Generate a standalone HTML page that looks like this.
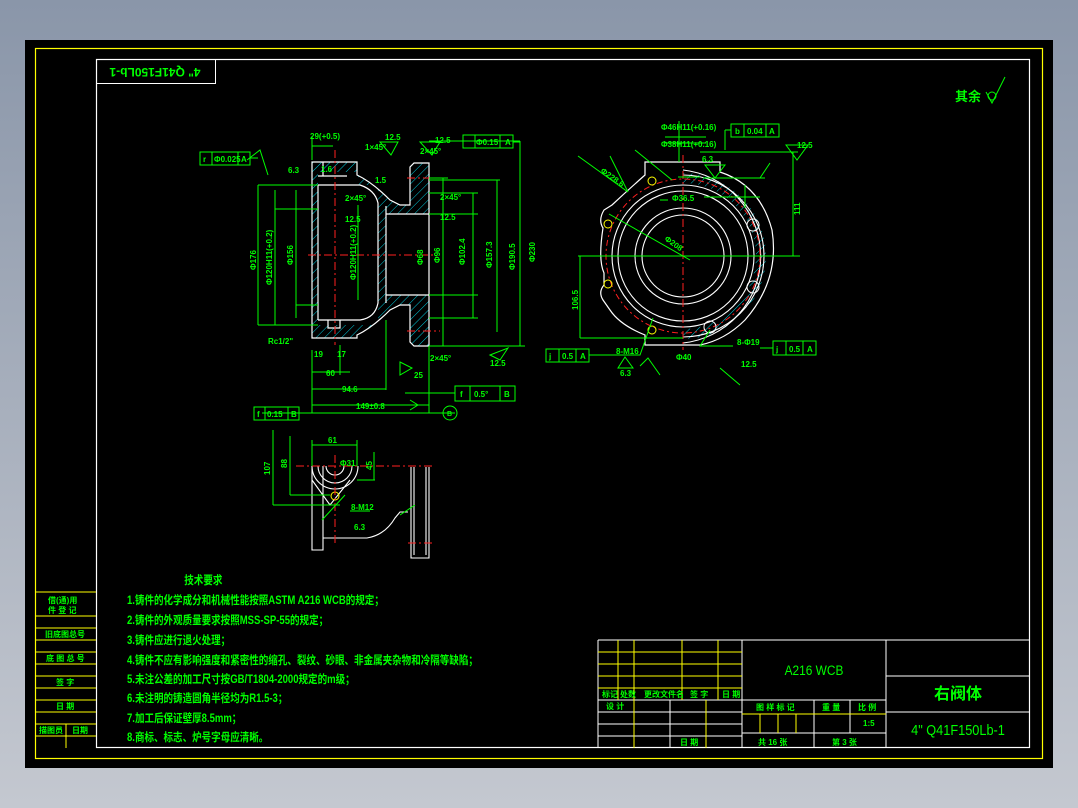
<!DOCTYPE html>
<html><head><meta charset="utf-8"><style>
html,body{margin:0;padding:0;width:1078px;height:808px;overflow:hidden;background:linear-gradient(#8a96a9,#c4c8d0);}
svg{position:absolute;left:0;top:0}
text{font-family:"Liberation Sans","Noto Sans CJK SC",sans-serif;fill:#00ff00}
</style></head><body>
<svg width="1078" height="808" viewBox="0 0 1078 808" xmlns="http://www.w3.org/2000/svg">
<defs>
<pattern id="h" width="6" height="6" patternUnits="userSpaceOnUse" patternTransform="rotate(45)">
<line x1="0" y1="0" x2="0" y2="6" stroke="#00ccdd" stroke-width="1"/></pattern>
</defs>
<rect x="25" y="40" width="1028" height="728" fill="#000"/>
<rect x="35.5" y="48.5" width="1007" height="710" fill="none" stroke="#ffff00" stroke-width="1.2"/>
<rect x="96.5" y="59.5" width="933" height="688" fill="none" stroke="#fff" stroke-width="1.2"/>
<rect x="96.5" y="59.5" width="119" height="24" fill="none" stroke="#fff"/>
<text x="155" y="71" font-size="12" text-anchor="middle" transform="rotate(180 155 71)" dominant-baseline="middle" font-weight="bold">4" Q41F150Lb-1</text>
<text x="955" y="101" font-size="13" font-weight="bold">其余</text>
<g stroke="#00ff00" fill="none"><circle cx="992" cy="96" r="4"/><path d="M986 92 L992 103 L1005 77"/></g>

<g stroke="#ffff00" fill="none">
<path d="M36 592H96M36 616H96M36 628H96M36 640H96M36 652H96M36 664H96M36 676H96M36 688H96M36 700H96M36 712H96M36 724H96M36 736H96M66 724V748"/>
</g>
<g font-size="8" font-weight="bold">
<text x="48" y="603">借(通)用</text><text x="48" y="613">件 登 记</text>
<text x="45" y="637">旧底图总号</text><text x="46" y="661">底 图 总 号</text>
<text x="56" y="685">签 字</text><text x="56" y="709">日 期</text>
<text x="39" y="733">描图员</text><text x="72" y="733">日期</text>
</g>

<g font-size="11.5" font-weight="bold" transform="translate(127 0) scale(0.83 1) translate(-127 0)">
<text x="196" y="584">技术要求</text>
<text x="127" y="604">1.铸件的化学成分和机械性能按照ASTM A216 WCB的规定；</text>
<text x="127" y="624">2.铸件的外观质量要求按照MSS-SP-55的规定；</text>
<text x="127" y="644">3.铸件应进行退火处理；</text>
<text x="127" y="664">4.铸件不应有影响强度和紧密性的缩孔、裂纹、砂眼、非金属夹杂物和冷隔等缺陷；</text>
<text x="127" y="683">5.未注公差的加工尺寸按GB/T1804-2000规定的m级；</text>
<text x="127" y="702">6.未注明的铸造圆角半径均为R1.5-3；</text>
<text x="127" y="722">7.加工后保证壁厚8.5mm；</text>
<text x="127" y="741">8.商标、标志、炉号字母应清晰。</text>
</g>

<g stroke="#fff" fill="none">
<path d="M598 640H1030M598 640V748M742 640V748M886 640V748M598 700H886M886 676H1030M886 712H1030M598 712H742M598 724H742M598 736H742M670 700V748M742 714H886M742 733H886M814 700V748M850 700V733"/>
</g>
<g stroke="#ffff00" fill="none">
<path d="M598 652H742M598 664H742M598 676H742M598 688H742M618 640V700M634 640V748M682 640V700M718 640V700M706 700V748M742 714H886M760 714V733M778 714V733M796 714V733"/>
</g>
<g font-size="8" font-weight="bold">
<text x="602" y="697">标记</text><text x="620" y="697">处数</text><text x="644" y="697">更改文件名</text><text x="690" y="697">签 字</text><text x="722" y="697">日 期</text>
<text x="606" y="709">设 计</text><text x="680" y="745">日 期</text>
<text x="756" y="710">图 样 标 记</text><text x="822" y="710">重 量</text><text x="858" y="710">比 例</text>
<text x="863" y="726">1:5</text>
<text x="758" y="745">共 16 张</text><text x="832" y="745">第 3 张</text>
</g>
<text x="814" y="675" font-size="14" text-anchor="middle" transform="translate(814 0) scale(0.85 1) translate(-814 0)">A216 WCB</text>
<text x="958" y="699" font-size="16" text-anchor="middle" font-weight="bold">右阀体</text>
<text x="958" y="735" font-size="15" text-anchor="middle" transform="translate(958 0) scale(0.85 1) translate(-958 0)">4" Q41F150Lb-1</text>

<path d="M312 162H357V175Q372 182 390 200L400 205H410V167L414 163H429V346H414L410 342V305H400L390 310Q372 328 357 335V338H312Z" fill="url(#h)"/>
<path d="M318 185H378V325H318Z M386 214H429V295H386Z" fill="#000"/>
<rect x="318" y="172" width="40" height="153" fill="#000"/>
<g stroke="#fff" fill="none" stroke-width="1.2">
<path d="M312 162H357V175Q372 182 390 200L400 205H410V167L414 163H429V346H414L410 342V305H400L390 310Q372 328 357 335V338H312Z"/>
<path d="M318 185V320M318 185H360Q375 190 378 203V303Q375 318 360 320H318"/>
<path d="M386 206V303M386 214H429M386 295H429M318 176H347M323 162V176"/>
<path d="M328 320V328H340V320"/>
</g>
<g stroke="#ff2020" stroke-dasharray="8 3 2 3"><path d="M308 255H435M335 150V345M407 178H440M407 331H440"/></g>
<g stroke="#00ff00" fill="none">
<path d="M258 185V325M275 190V325M296 190V318M258 185H318M258 325H318M275 209H318M296 305H318"/>
<path d="M358 205V300M443 178V346M473 193V318M497 180V332M520 141V346M429 178H448M429 193H478M429 214H478M429 295H478M429 318H478M429 346H525M429 180H500M429 141H520"/>
<path d="M312 350V413M312 372H350M312 389H386M312 405H429M429 346V413M340 345V375M386 320V390"/>
<path d="M262 413H455"/>
<path d="M312 137V160M312 146H333M380 142L398 142L391 155ZM420 142L440 142L432 155ZM247 160L260 150L268 175"/>
<rect x="463" y="135" width="50" height="13"/><path d="M475 135V148M500 135V148M513 142H520"/>
<rect x="200" y="152" width="50" height="13"/><path d="M212 152V165M238 152V165M250 158H258"/>
<rect x="455" y="386" width="60" height="15"/><path d="M470 386V401M500 386V401M405 393H455"/>
<rect x="254" y="407" width="45" height="13"/><path d="M265 407V420M288 407V420"/>
<circle cx="450" cy="413" r="7"/>
<path d="M490 355L508 348L500 360ZM400 362L412 368L400 375ZM410 400L418 405L410 410"/>
</g>
<g font-size="8" font-weight="bold">
<text x="310" y="139">29(+0.5)</text><text x="365" y="150">1×45°</text><text x="385" y="140">12.5</text>
<text x="435" y="143">12.5</text><text x="420" y="154">2×45°</text><text x="476" y="145">Φ0.15</text><text x="505" y="145">A</text>
<text x="203" y="162">r</text><text x="214" y="162">Φ0.025</text><text x="241" y="162">A</text>
<text x="288" y="173">6.3</text><text x="321" y="172">1.6</text><text x="375" y="183">1.5</text>
<text x="345" y="201">2×45°</text><text x="345" y="222">12.5</text><text x="440" y="200">2×45°</text><text x="440" y="220">12.5</text>
<text x="268" y="344">Rc1/2"</text><text x="314" y="357">19</text><text x="337" y="357">17</text>
<text x="326" y="376">60</text><text x="342" y="392">94.6</text><text x="356" y="409">149±0.8</text>
<text x="430" y="361">2×45°</text><text x="414" y="378">25</text><text x="490" y="366">12.5</text>
<text x="460" y="397">f</text><text x="474" y="397">0.5°</text><text x="504" y="397">B</text>
<text x="257" y="417">f</text><text x="267" y="417">0.15</text><text x="291" y="417">B</text>
<text x="447" y="416" font-size="7">B</text>
</g>
<g font-size="8" font-weight="bold"><text transform="translate(256 270) rotate(-90)">Φ176</text><text transform="translate(272 285) rotate(-90)">Φ120H11(+0.2)</text>
<text transform="translate(293 265) rotate(-90)">Φ156</text><text transform="translate(356 280) rotate(-90)">Φ120H11(+0.2)</text>
<text transform="translate(423 265) rotate(-90)">Φ68</text><text transform="translate(440 263) rotate(-90)">Φ96</text>
<text transform="translate(465 265) rotate(-90)">Φ102.4</text><text transform="translate(492 268) rotate(-90)">Φ157.3</text>
<text transform="translate(515 270) rotate(-90)">Φ190.5</text><text transform="translate(535 262) rotate(-90)">Φ230</text></g>

<g fill="none">
<path d="M645 162H720V172Q760 185 772 230Q780 280 745 320Q725 340 700 345H645V335Q620 325 610 310L603 300Q598 292 604 285V273Q598 260 603 228Q598 220 604 210L612 205Q628 190 645 175Z" fill="#000" stroke="#fff" stroke-width="1.2"/>
<path d="M683 178A78 78 0 0 1 683 334" stroke="url(#h)" stroke-width="10"/>
<g stroke="#fff" stroke-width="1.1">
<circle cx="683" cy="256" r="71"/><circle cx="683" cy="256" r="65"/><circle cx="683" cy="256" r="48"/><circle cx="683" cy="256" r="41"/>
<path d="M683 175A81 81 0 0 1 683 337"/><path d="M683 170A87 87 0 0 1 683 343"/>
</g>
<circle cx="683" cy="256" r="77" stroke="#ff2020" stroke-dasharray="6 3 2 3"/>
<g stroke="#ffff00"><circle cx="652" cy="181" r="4"/><circle cx="608" cy="224" r="4"/><circle cx="608" cy="284" r="4"/><circle cx="652" cy="330" r="4"/></g>
<g stroke="#fff"><circle cx="753" cy="225" r="6"/><circle cx="753" cy="287" r="6"/><circle cx="710" cy="327" r="6"/></g>
<path d="M595 256H780M683 155V350" stroke="#ff2020" stroke-dasharray="8 3 2 3"/>
</g>
<g stroke="#00ff00" fill="none">
<path d="M578 156L628 192M635 150L672 180M609 214L690 260M660 200H668M665 137H706M665 143H706M679 121V162M700 152H798M703 178H765M760 178L770 163M793 152V256M683 256H800M704 197H760M745 185V208M678 177H700"/>
<path d="M578 256H685M580 256V338M580 338H683M602 355H640L653 318M733 346H700L710 330M720 368L740 385M640 366L648 358L660 375"/>
<path d="M610 156L628 192"/>
<rect x="731" y="124" width="48" height="13"/><path d="M744 124V137M766 124V137M725 130H731M725 130V150"/>
<rect x="546" y="349" width="43" height="13"/><path d="M559 349V362M576 349V362M589 355H602"/>
<rect x="773" y="341" width="43" height="14"/><path d="M786 341V355M803 341V355M760 348H773"/>
<path d="M786 145L808 145L797 160ZM705 165L725 165L715 178ZM618 368L633 368L625 357Z"/>
</g>
<g font-size="8" font-weight="bold">
<text x="661" y="130">Φ46H11(+0.16)</text><text x="661" y="147">Φ38H11(+0.16)</text>
<text x="735" y="134">b</text><text x="747" y="134">0.04</text><text x="769" y="134">A</text>
<text x="797" y="148">12.5</text><text x="672" y="201">Φ36.5</text><text x="702" y="162">6.3</text>
<text x="549" y="359">j</text><text x="562" y="359">0.5</text><text x="580" y="359">A</text>
<text x="776" y="352">j</text><text x="789" y="352">0.5</text><text x="807" y="352">A</text>
<text x="616" y="354">8-M16</text><text x="620" y="376">6.3</text><text x="676" y="360">Φ40</text>
<text x="737" y="345">8-Φ19</text><text x="741" y="367">12.5</text>
<text transform="translate(664 240) rotate(35)">Φ208</text>
<text transform="translate(600 172) rotate(35)">Φ228.6</text>
<text transform="translate(800 215) rotate(-90)">111</text>
<text transform="translate(578 310) rotate(-90)">106.5</text>
</g>

<g stroke="#fff" fill="none" stroke-width="1.1">
<path d="M312 466V550H323V466M323 538H367Q385 535 395 518L400 512H408M411 467V558H429V467M414 467V555M426 467V555"/>
<path d="M312 480L330 505L350 480"/>
<path d="M318 466A17 17 0 0 0 352 466M326 466A9 9 0 0 0 344 466M312 466A23 23 0 0 0 358 466"/>
</g>
<circle cx="335" cy="496" r="4" stroke="#ffff00" fill="none"/>
<path d="M296 466H435M335 455V545M408 543H432" stroke="#ff2020" stroke-dasharray="8 3 2 3"/>
<g stroke="#00ff00" fill="none">
<path d="M273 430V505M273 505H340M290 436V495M290 495H330M312 440V466M357 440V466M312 445H357M374 452V480M357 480H375M350 511H370M322 520L345 495M400 515L415 505"/>
</g>
<g font-size="8" font-weight="bold">
<text x="328" y="443">61</text><text x="340" y="466">Φ31</text><text x="351" y="510">8-M12</text><text x="354" y="530">6.3</text>
<text transform="translate(270 475) rotate(-90)">107</text><text transform="translate(287 468) rotate(-90)">88</text>
<text transform="translate(372 470) rotate(-90)">45</text>
</g>
</svg>
</body></html>
